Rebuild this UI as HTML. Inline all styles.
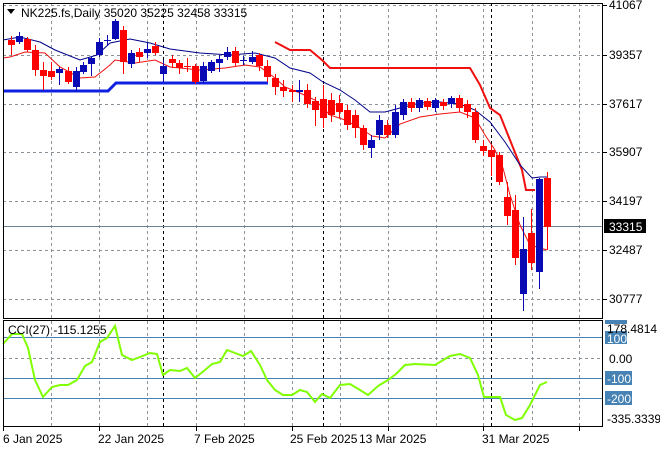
<!DOCTYPE html>
<html><head><style>
html,body{margin:0;padding:0;background:#fff;}
svg{display:block;font-family:"Liberation Sans",sans-serif;}
</style></head><body>
<svg width="660" height="450" xmlns="http://www.w3.org/2000/svg">
<rect width="660" height="450" fill="#fff"/>
<g stroke="#8a929a" stroke-dasharray="3,3" stroke-width="1">
<line x1="51.5" y1="3" x2="51.5" y2="426"/><line x1="99.5" y1="3" x2="99.5" y2="426"/>
<line x1="147.5" y1="3" x2="147.5" y2="426"/><line x1="196.5" y1="3" x2="196.5" y2="426"/>
<line x1="244.5" y1="3" x2="244.5" y2="426"/><line x1="292.5" y1="3" x2="292.5" y2="426"/>
<line x1="340.5" y1="3" x2="340.5" y2="426"/><line x1="388.5" y1="3" x2="388.5" y2="426"/>
<line x1="436.5" y1="3" x2="436.5" y2="426"/><line x1="483.5" y1="3" x2="483.5" y2="426"/>
<line x1="532.5" y1="3" x2="532.5" y2="426"/><line x1="579.5" y1="3" x2="579.5" y2="426"/>
<line x1="3" y1="5.5" x2="603" y2="5.5"/><line x1="3" y1="55.5" x2="603" y2="55.5"/>
<line x1="3" y1="104.5" x2="603" y2="104.5"/><line x1="3" y1="152.5" x2="603" y2="152.5"/>
<line x1="3" y1="201.5" x2="603" y2="201.5"/><line x1="3" y1="250.5" x2="603" y2="250.5"/>
<line x1="3" y1="299.5" x2="603" y2="299.5"/><line x1="3" y1="358.5" x2="603" y2="358.5"/>
</g>
<g stroke="#000" stroke-dasharray="3,3" stroke-width="1">
<line x1="163.5" y1="3" x2="163.5" y2="426"/><line x1="323.5" y1="3" x2="323.5" y2="426"/><line x1="491.5" y1="3" x2="491.5" y2="426"/>
</g>
<line x1="3" y1="226.5" x2="603" y2="226.5" stroke="#6e8296"/>
<g stroke="#4682b4"><line x1="3" y1="337.5" x2="603" y2="337.5"/><line x1="3" y1="378.5" x2="603" y2="378.5"/><line x1="3" y1="398.5" x2="603" y2="398.5"/></g>
<polyline fill="none" stroke="#1020e0" stroke-width="3" points="3,91 108,91 116,83 268,83"/>
<polyline fill="none" stroke="#f01010" stroke-width="2" points="275,42 290,50 310,50 322,60 330,68 470,68 480,85 490,108 500,115 510,140 522,170 526,190 535,190"/>
<polyline fill="none" stroke="#00008b" stroke-width="1" points="3,40 20,37 40,42 55,50 80,60 97,55 110,43 130,39 150,43 170,49 200,53 230,55 255,53 275,58 290,68 310,73 323,82 340,90 355,100 370,112 385,112 400,108 420,103 440,102 460,104 475,110 490,122 505,142 520,165 532,178 540,177 547,177"/>
<polyline fill="none" stroke="#f01010" stroke-width="1" points="3,58 10,57 25,52 45,53 60,67 80,78 95,77 110,65 115,60 135,63 155,60 170,67 200,70 225,68 245,65 260,67 275,78 285,87 300,93 315,100 330,115 345,120 360,128 372,136 385,138 400,124 420,117 440,114 460,112 475,118 485,135 495,150 503,168 510,195 520,225 530,245 547,250"/>
<g>
<line x1="11.5" y1="36" x2="11.5" y2="55" stroke="#f00"/><rect x="8" y="40" width="7" height="5" fill="#f00"/>
<line x1="19.5" y1="32" x2="19.5" y2="44" stroke="#0a0ab4"/><rect x="16" y="36" width="7" height="6" fill="#0a0ab4"/>
<line x1="27.5" y1="37" x2="27.5" y2="52" stroke="#f00"/><rect x="24" y="39" width="7" height="11" fill="#f00"/>
<line x1="35.5" y1="45" x2="35.5" y2="76" stroke="#f00"/><rect x="32" y="50" width="7" height="20" fill="#f00"/>
<line x1="43.5" y1="62" x2="43.5" y2="90" stroke="#f00"/><rect x="40" y="70" width="7" height="6" fill="#f00"/>
<line x1="51.5" y1="62" x2="51.5" y2="80" stroke="#f00"/><rect x="48" y="71" width="7" height="6" fill="#f00"/>
<line x1="59.5" y1="67" x2="59.5" y2="85" stroke="#0a0ab4"/><rect x="56" y="69" width="7" height="4" fill="#0a0ab4"/>
<line x1="68.5" y1="67" x2="68.5" y2="84" stroke="#f00"/><rect x="65" y="71" width="7" height="11" fill="#f00"/>
<line x1="76.5" y1="67" x2="76.5" y2="91" stroke="#0a0ab4"/><rect x="73" y="71" width="7" height="16" fill="#0a0ab4"/>
<line x1="83.5" y1="62" x2="83.5" y2="74" stroke="#0a0ab4"/><rect x="80" y="65" width="7" height="7" fill="#0a0ab4"/>
<line x1="91.5" y1="56" x2="91.5" y2="76" stroke="#0a0ab4"/><rect x="88" y="58" width="7" height="6" fill="#0a0ab4"/>
<line x1="99.5" y1="38" x2="99.5" y2="57" stroke="#0a0ab4"/><rect x="96" y="42" width="7" height="13" fill="#0a0ab4"/>
<line x1="107.5" y1="35" x2="107.5" y2="46" stroke="#0a0ab4"/><rect x="104" y="40" width="7" height="1" fill="#0a0ab4"/>
<line x1="115.5" y1="19" x2="115.5" y2="40" stroke="#0a0ab4"/><rect x="112" y="21" width="7" height="18" fill="#0a0ab4"/>
<line x1="123.5" y1="26" x2="123.5" y2="74" stroke="#f00"/><rect x="120" y="30" width="7" height="32" fill="#f00"/>
<line x1="131.5" y1="50" x2="131.5" y2="68" stroke="#0a0ab4"/><rect x="128" y="53" width="7" height="11" fill="#0a0ab4"/>
<line x1="139.5" y1="48" x2="139.5" y2="62" stroke="#f00"/><rect x="136" y="52" width="7" height="5" fill="#f00"/>
<line x1="147.5" y1="43" x2="147.5" y2="58" stroke="#0a0ab4"/><rect x="144" y="49" width="7" height="4" fill="#0a0ab4"/>
<line x1="155.5" y1="42" x2="155.5" y2="55" stroke="#f00"/><rect x="152" y="46" width="7" height="7" fill="#f00"/>
<line x1="163.5" y1="60" x2="163.5" y2="82" stroke="#0a0ab4"/><rect x="160" y="66" width="7" height="8" fill="#0a0ab4"/>
<line x1="172.5" y1="55" x2="172.5" y2="68" stroke="#f00"/><rect x="169" y="59" width="7" height="4" fill="#f00"/>
<line x1="179.5" y1="60" x2="179.5" y2="74" stroke="#f00"/><rect x="176" y="63" width="7" height="5" fill="#f00"/>
<line x1="187.5" y1="58" x2="187.5" y2="72" stroke="#f00"/><rect x="184" y="66" width="7" height="1" fill="#f00"/>
<line x1="195.5" y1="64" x2="195.5" y2="84" stroke="#f00"/><rect x="192" y="66" width="7" height="16" fill="#f00"/>
<line x1="203.5" y1="62" x2="203.5" y2="83" stroke="#0a0ab4"/><rect x="200" y="66" width="7" height="15" fill="#0a0ab4"/>
<line x1="211.5" y1="60" x2="211.5" y2="73" stroke="#0a0ab4"/><rect x="208" y="62" width="7" height="9" fill="#0a0ab4"/>
<line x1="219.5" y1="55" x2="219.5" y2="72" stroke="#0a0ab4"/><rect x="216" y="59" width="7" height="4" fill="#0a0ab4"/>
<line x1="227.5" y1="47" x2="227.5" y2="60" stroke="#0a0ab4"/><rect x="224" y="52" width="7" height="5" fill="#0a0ab4"/>
<line x1="235.5" y1="47" x2="235.5" y2="66" stroke="#f00"/><rect x="232" y="51" width="7" height="12" fill="#f00"/>
<line x1="243.5" y1="56" x2="243.5" y2="65" stroke="#0a0ab4"/><rect x="240" y="60" width="7" height="1" fill="#0a0ab4"/>
<line x1="252.5" y1="51" x2="252.5" y2="64" stroke="#0a0ab4"/><rect x="249" y="57" width="7" height="5" fill="#0a0ab4"/>
<line x1="259.5" y1="53" x2="259.5" y2="71" stroke="#f00"/><rect x="256" y="55" width="7" height="11" fill="#f00"/>
<line x1="267.5" y1="60" x2="267.5" y2="82" stroke="#f00"/><rect x="264" y="66" width="7" height="11" fill="#f00"/>
<line x1="275.5" y1="74" x2="275.5" y2="95" stroke="#f00"/><rect x="272" y="78" width="7" height="9" fill="#f00"/>
<line x1="283.5" y1="80" x2="283.5" y2="97" stroke="#f00"/><rect x="280" y="87" width="7" height="4" fill="#f00"/>
<line x1="292.5" y1="85" x2="292.5" y2="102" stroke="#f00"/><rect x="289" y="90" width="7" height="2" fill="#f00"/>
<line x1="299.5" y1="80" x2="299.5" y2="102" stroke="#0a0ab4"/><rect x="296" y="90" width="7" height="2" fill="#0a0ab4"/>
<line x1="307.5" y1="84" x2="307.5" y2="108" stroke="#f00"/><rect x="304" y="90" width="7" height="14" fill="#f00"/>
<line x1="315.5" y1="97" x2="315.5" y2="126" stroke="#f00"/><rect x="312" y="101" width="7" height="9" fill="#f00"/>
<line x1="323.5" y1="85" x2="323.5" y2="128" stroke="#f00"/><rect x="320" y="99" width="7" height="19" fill="#f00"/>
<line x1="331.5" y1="93" x2="331.5" y2="122" stroke="#f00"/><rect x="328" y="100" width="7" height="15" fill="#f00"/>
<line x1="339.5" y1="95" x2="339.5" y2="118" stroke="#f00"/><rect x="336" y="103" width="7" height="9" fill="#f00"/>
<line x1="347.5" y1="105" x2="347.5" y2="130" stroke="#f00"/><rect x="344" y="110" width="7" height="15" fill="#f00"/>
<line x1="355.5" y1="110" x2="355.5" y2="138" stroke="#f00"/><rect x="352" y="115" width="7" height="13" fill="#f00"/>
<line x1="363.5" y1="125" x2="363.5" y2="150" stroke="#f00"/><rect x="360" y="128" width="7" height="17" fill="#f00"/>
<line x1="371.5" y1="135" x2="371.5" y2="158" stroke="#0a0ab4"/><rect x="368" y="140" width="7" height="8" fill="#0a0ab4"/>
<line x1="379.5" y1="115" x2="379.5" y2="140" stroke="#0a0ab4"/><rect x="376" y="120" width="7" height="15" fill="#0a0ab4"/>
<line x1="387.5" y1="120" x2="387.5" y2="138" stroke="#f00"/><rect x="384" y="125" width="7" height="10" fill="#f00"/>
<line x1="395.5" y1="105" x2="395.5" y2="138" stroke="#0a0ab4"/><rect x="392" y="112" width="7" height="23" fill="#0a0ab4"/>
<line x1="403.5" y1="99" x2="403.5" y2="120" stroke="#0a0ab4"/><rect x="400" y="102" width="7" height="13" fill="#0a0ab4"/>
<line x1="411.5" y1="98" x2="411.5" y2="112" stroke="#f00"/><rect x="408" y="102" width="7" height="6" fill="#f00"/>
<line x1="419.5" y1="98" x2="419.5" y2="112" stroke="#0a0ab4"/><rect x="416" y="100" width="7" height="8" fill="#0a0ab4"/>
<line x1="427.5" y1="98" x2="427.5" y2="110" stroke="#f00"/><rect x="424" y="101" width="7" height="6" fill="#f00"/>
<line x1="435.5" y1="98" x2="435.5" y2="112" stroke="#0a0ab4"/><rect x="432" y="100" width="7" height="8" fill="#0a0ab4"/>
<line x1="443.5" y1="99" x2="443.5" y2="110" stroke="#f00"/><rect x="440" y="102" width="7" height="4" fill="#f00"/>
<line x1="451.5" y1="96" x2="451.5" y2="108" stroke="#0a0ab4"/><rect x="448" y="98" width="7" height="6" fill="#0a0ab4"/>
<line x1="459.5" y1="95" x2="459.5" y2="112" stroke="#f00"/><rect x="456" y="98" width="7" height="10" fill="#f00"/>
<line x1="467.5" y1="100" x2="467.5" y2="118" stroke="#f00"/><rect x="464" y="104" width="7" height="8" fill="#f00"/>
<line x1="475.5" y1="108" x2="475.5" y2="143" stroke="#f00"/><rect x="472" y="112" width="7" height="28" fill="#f00"/>
<line x1="483.5" y1="140" x2="483.5" y2="156" stroke="#f00"/><rect x="480" y="146" width="7" height="5" fill="#f00"/>
<line x1="491.5" y1="145" x2="491.5" y2="176" stroke="#f00"/><rect x="488" y="150" width="7" height="7" fill="#f00"/>
<line x1="499.5" y1="152" x2="499.5" y2="185" stroke="#f00"/><rect x="496" y="155" width="7" height="27" fill="#f00"/>
<line x1="507.5" y1="182" x2="507.5" y2="225" stroke="#f00"/><rect x="504" y="197" width="7" height="19" fill="#f00"/>
<line x1="515.5" y1="195" x2="515.5" y2="265" stroke="#f00"/><rect x="512" y="210" width="7" height="48" fill="#f00"/>
<line x1="523.5" y1="217" x2="523.5" y2="311" stroke="#0a0ab4"/><rect x="520" y="249" width="7" height="45" fill="#0a0ab4"/>
<line x1="531.5" y1="209" x2="531.5" y2="270" stroke="#f00"/><rect x="528" y="233" width="7" height="30" fill="#f00"/>
<line x1="539.5" y1="178" x2="539.5" y2="289" stroke="#0a0ab4"/><rect x="536" y="179" width="7" height="93" fill="#0a0ab4"/>
<line x1="547.5" y1="172" x2="547.5" y2="250" stroke="#f00"/><rect x="544" y="178" width="7" height="49" fill="#f00"/>
</g>
<polyline fill="none" stroke="#7fff00" stroke-width="2" points="3,344 12,334 22,334 28,348 35,380 43,397 52,387 60,385 68,385 77,380 85,366 92,362 100,342 107,338 115,326 122,355 132,360 140,357 150,353 157,354 163,375 170,370 180,371 187,368 195,378 205,370 212,364 220,362 227,350 235,353 243,356 251,351 260,365 267,380 275,390 283,395 292,395 300,390 307,392 315,402 322,394 330,398 340,385 350,384 360,390 368,395 378,386 388,380 396,374 405,365 415,364 435,365 450,356 460,354 470,358 478,375 484,397 500,397 506,415 515,420 522,418 530,405 540,385 547,382"/>
<rect x="3.5" y="3.5" width="599" height="315" fill="none" stroke="#000"/>
<rect x="3.5" y="320.5" width="599" height="106" fill="none" stroke="#000"/>
<g stroke="#000"><line x1="3.5" y1="427" x2="3.5" y2="431"/><line x1="99.5" y1="427" x2="99.5" y2="431"/><line x1="196.5" y1="427" x2="196.5" y2="431"/><line x1="292.5" y1="427" x2="292.5" y2="431"/><line x1="388.5" y1="427" x2="388.5" y2="431"/><line x1="483.5" y1="427" x2="483.5" y2="431"/><line x1="579.5" y1="427" x2="579.5" y2="431"/>
<line x1="603" y1="5.5" x2="607" y2="5.5"/><line x1="603" y1="55.5" x2="607" y2="55.5"/><line x1="603" y1="104.5" x2="607" y2="104.5"/><line x1="603" y1="152.5" x2="607" y2="152.5"/><line x1="603" y1="201.5" x2="607" y2="201.5"/><line x1="603" y1="250.5" x2="607" y2="250.5"/><line x1="603" y1="299.5" x2="607" y2="299.5"/></g>
<g font-size="12" fill="#000">
<text x="609" y="9">41067</text><text x="609" y="59">39357</text><text x="609" y="108">37617</text><text x="609" y="156">35907</text><text x="609" y="205">34197</text><text x="609" y="254">32487</text><text x="609" y="303">30777</text>
<rect x="604" y="219" width="42" height="14" fill="#000"/><text x="609" y="231" fill="#fff">33315</text>
<rect x="605" y="320" width="22" height="4" fill="#4682b4"/>
<rect x="605" y="331" width="22" height="13" fill="#4682b4"/><text x="607" y="343" fill="#fff">100</text>
<text x="607" y="333">178.4814</text>
<text x="609" y="363">0.00</text>
<rect x="605" y="371" width="27" height="14" fill="#4682b4"/><text x="607" y="383" fill="#fff">-100</text>
<rect x="605" y="391" width="27" height="14" fill="#4682b4"/><text x="607" y="403" fill="#fff">-200</text>
<text x="607" y="423">-335.3339</text>
<text x="3" y="443">6 Jan 2025</text><text x="98" y="443">22 Jan 2025</text><text x="194" y="443">7 Feb 2025</text><text x="290" y="443">25 Feb 2025</text><text x="359" y="443">13 Mar 2025</text><text x="482" y="443">31 Mar 2025</text>
<text x="21" y="17">NK225.fs,Daily  35020 35225 32458 33315</text>
<text x="8" y="334">CCI(27) -115.1255</text>
</g>
<polygon points="7,9 15,9 11,14" fill="#000"/>
</svg>
</body></html>
